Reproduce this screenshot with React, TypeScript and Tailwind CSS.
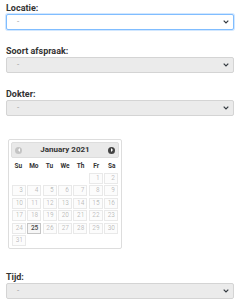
import React from "react";

function Chevron() {
  return (
    <svg width="6" height="4" viewBox="0 0 6 4" className="shrink-0">
      <path d="M0.7 0.7 L3 3 L5.3 0.7" fill="none" stroke="#343a40" strokeWidth="1.2" />
    </svg>
  );
}

function Field({ label, active = false }: { label: string; active?: boolean }) {
  return (
    <div className="flex flex-col">
      <label className="h-[11px] text-[9px] font-bold leading-[11px] text-[#333]">{label}</label>
      <div
        className={
          active
            ? "flex h-[16px] items-center justify-between rounded-[2px] border border-[#80bdff] bg-white pl-[10px] pr-[4px] shadow-[0_0_0_1px_rgba(0,123,255,0.18)]"
            : "flex h-[16px] items-center justify-between rounded-[2px] border border-[#d4d4d4] bg-[#ebebeb] pl-[10px] pr-[4px]"
        }
      >
        <span className="text-[8px] leading-none text-[#9a9a9a]">-</span>
        <Chevron />
      </div>
    </div>
  );
}

const days = ["Su", "Mo", "Tu", "We", "Th", "Fr", "Sa"];

function Calendar() {
  const cells: (number | null)[] = [null, null, null, null, null];
  for (let d = 1; d <= 31; d++) cells.push(d);
  while (cells.length % 7 !== 0) cells.push(null);

  return (
    <div className="w-[114px] rounded-[2px] border border-[#dddddd] bg-white p-[2px]">
      <div className="flex h-[16px] items-center justify-between rounded-[2px] border border-[#dddddd] bg-[#e9e9e9] px-[3px]">
        <span className="flex h-[7px] w-[7px] items-center justify-center rounded-full bg-[#c4c4c4]">
          <span className="h-0 w-0 border-y-[2px] border-r-[2px] border-y-transparent border-r-white" />
        </span>
        <span className="text-[8px] font-bold text-[#333]">January 2021</span>
        <span className="flex h-[7px] w-[7px] items-center justify-center rounded-full bg-[#444]">
          <span className="h-0 w-0 border-y-[2px] border-l-[2px] border-y-transparent border-l-white" />
        </span>
      </div>
      <div className="mt-[3px] grid grid-cols-7 gap-x-[1px]">
        {days.map((d) => (
          <div key={d} className="h-[11px] text-center text-[6.5px] font-bold leading-[11px] text-[#333]">
            {d}
          </div>
        ))}
      </div>
      <div className="mt-[1px] grid grid-cols-7 gap-[1.4px] px-[1px]">
        {cells.map((c, i) =>
          c === null ? (
            <div key={i} className="h-[11px]" />
          ) : (
            <div
              key={i}
              className={
                c === 25
                  ? "h-[11px] border border-[#c5c5c5] bg-[#f6f6f6] pr-[2px] text-right text-[6.5px] font-medium leading-[9px] text-[#454545]"
                  : "h-[11px] border border-[#c5c5c5]/35 bg-[#f6f6f6]/35 pr-[2px] text-right text-[6.5px] leading-[9px] text-[#454545]/35"
              }
            >
              {c}
            </div>
          )
        )}
      </div>
    </div>
  );
}

export default function App() {
  return (
    <div className="w-[249px] bg-white pl-[6px] pr-[15px] pt-[3px] font-['Roboto',sans-serif]">
      <div className="flex flex-col gap-[16px]">
        <Field label="Locatie:" active />
        <Field label="Soort afspraak:" />
        <Field label="Dokter:" />
      </div>
      <div className="mt-[23px] pl-[2px]">
        <Calendar />
      </div>
      <div className="mt-[23px]">
        <Field label="Tijd:" />
      </div>
    </div>
  );
}
